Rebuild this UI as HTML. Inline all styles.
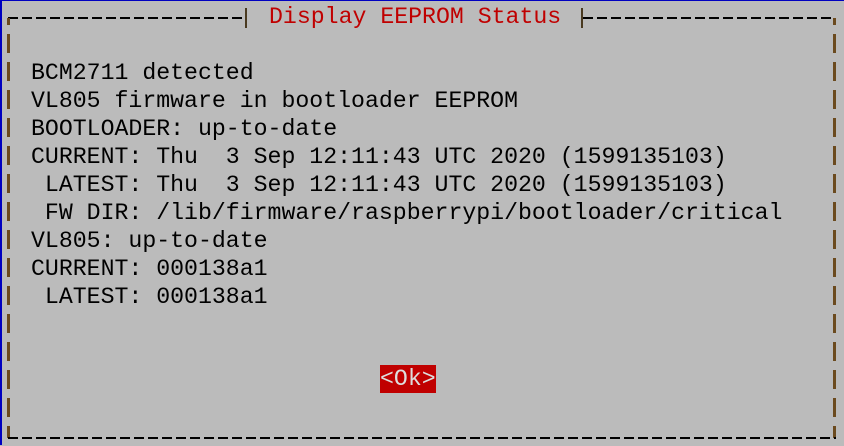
<!DOCTYPE html>
<html><head><style>
html,body{margin:0;padding:0}
body{width:844px;height:446px;background:#bbbbbb;position:relative;overflow:hidden;font-family:"Liberation Mono",monospace}
.frame{position:absolute;left:0;top:0;width:842px;height:444px;border-top:1px solid #0000c0;border-left:2px solid #0000c0}
.h{position:absolute;height:2px;background:repeating-linear-gradient(90deg,#000 0 10px,transparent 10px 14px)}
.v{position:absolute;width:3px;background:repeating-linear-gradient(180deg,#6b4a1e 0 19px,transparent 19px 28px)}
.t{position:absolute;left:31px;font-size:23.2px;line-height:28px;height:28px;white-space:pre;color:#000;top:1px}
.tee{position:absolute;width:2px;height:20px;background:#4a3a20}
</style></head><body>
<div class="frame"></div>
<div class="h" style="left:8px;top:17px;width:238px"></div>
<div class="h" style="left:583px;top:17px;width:252px"></div>
<div class="tee" style="left:245px;top:8px"></div>
<div class="tee" style="left:581px;top:8px"></div>
<div class="v" style="left:7px;top:18px;height:420px;background-position:0 16px"></div>
<div class="v" style="left:833px;top:18px;height:420px;background-position:0 16px"></div>
<div class="h" style="left:8px;top:437px;width:828px"></div>
<div class="t" style="left:269px;top:3px;color:#c00000">Display EEPROM Status</div>
<div class="t" style="top:59px">BCM2711 detected</div>
<div class="t" style="top:87px">VL805 firmware in bootloader EEPROM</div>
<div class="t" style="top:115px">BOOTLOADER: up-to-date</div>
<div class="t" style="top:143px">CURRENT: Thu  3 Sep 12:11:43 UTC 2020 (1599135103)</div>
<div class="t" style="top:171px"> LATEST: Thu  3 Sep 12:11:43 UTC 2020 (1599135103)</div>
<div class="t" style="top:199px"> FW DIR: /lib/firmware/raspberrypi/bootloader/critical</div>
<div class="t" style="top:227px">VL805: up-to-date</div>
<div class="t" style="top:255px">CURRENT: 000138a1</div>
<div class="t" style="top:283px"> LATEST: 000138a1</div>
<div class="t" style="left:380px;top:365px;background:#c00000;color:#dddddd;width:56px">&lt;Ok&gt;</div>
</body></html>
